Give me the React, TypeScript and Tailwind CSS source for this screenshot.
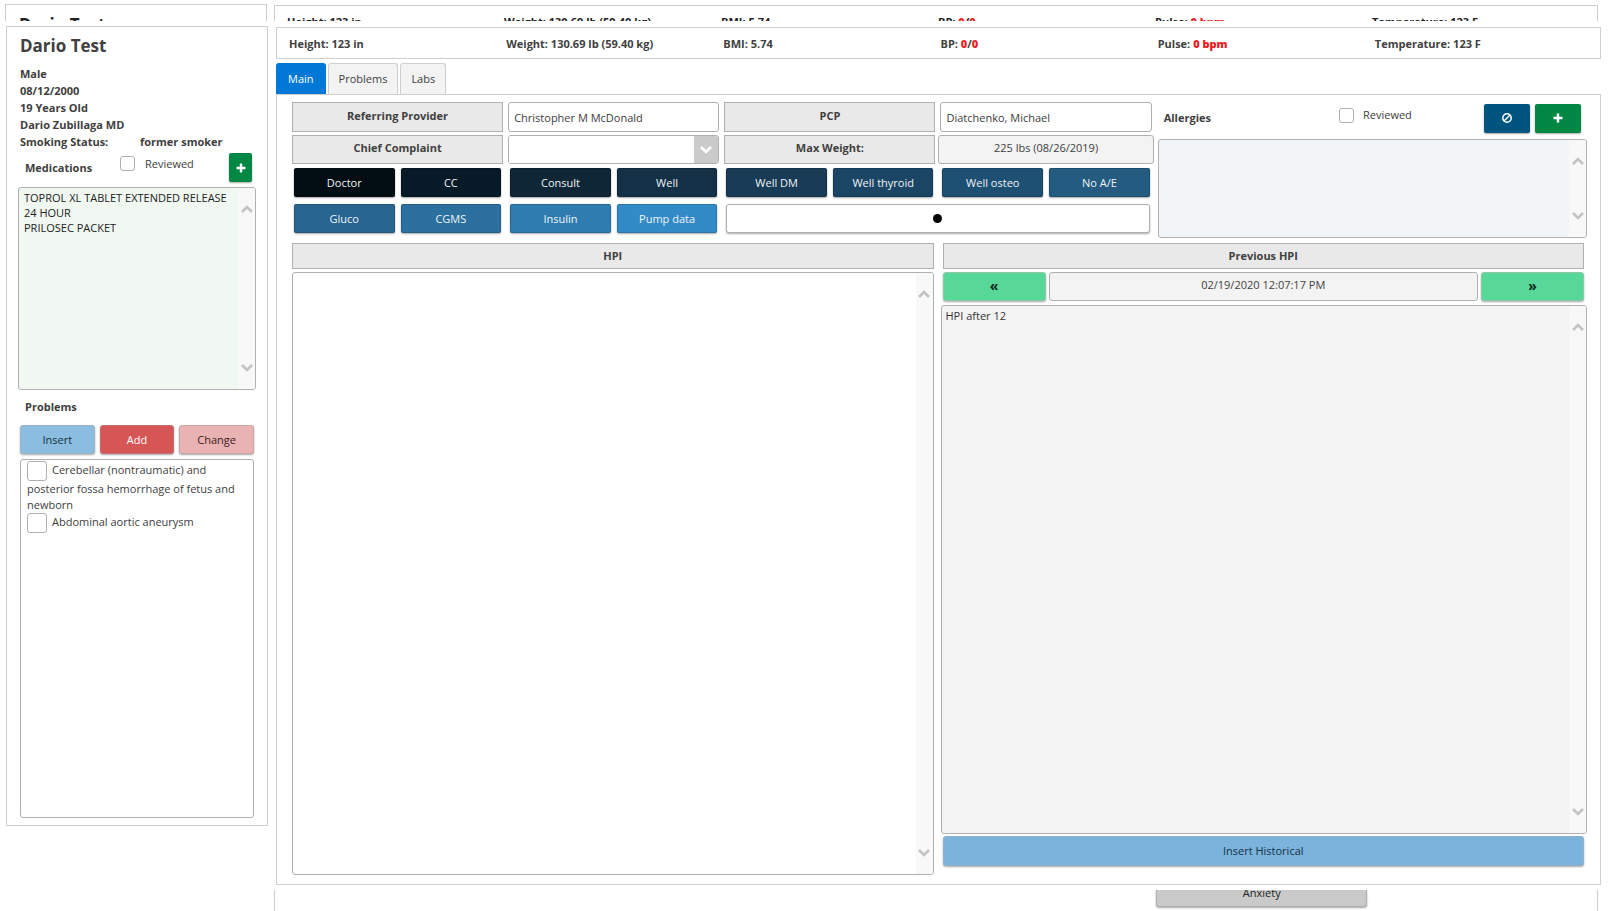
import type { ReactNode } from "react";

const shadow = "shadow-[0_1px_2px_rgba(0,0,0,0.35)]";

function Chevron({ up = false, className = "text-[#c3c3c3]" }: { up?: boolean; className?: string }) {
  return (
    <svg width="12" height="8" viewBox="0 0 12 8" fill="none" stroke="currentColor" strokeWidth="2.6" className={className} aria-hidden="true">
      <path d={up ? "M1 7 L6 2 L11 7" : "M1 1 L6 6 L11 1"} />
    </svg>
  );
}

function PlusIcon() {
  return (
    <svg width="10" height="10" viewBox="0 0 10 10" fill="currentColor" aria-hidden="true">
      <path d="M3.8 0.5h2.4v3.3h3.3v2.4h-3.3v3.3h-2.4v-3.3h-3.3v-2.4h3.3z" />
    </svg>
  );
}

function BanIcon() {
  return (
    <svg width="10" height="10" viewBox="0 0 10 10" fill="none" stroke="currentColor" strokeWidth="1.5" aria-hidden="true">
      <circle cx="5" cy="5" r="4.2" />
      <path d="M8 2 L2 8" />
    </svg>
  );
}

function ScrollPane({ children, className }: { children: ReactNode; className: string }) {
  return (
    <div className={`flex overflow-hidden rounded-[3px] border border-[#b0b0b0] ${className}`}>
      <div className="flex min-w-0 flex-1">{children}</div>
      <div className="flex w-[17px] flex-col items-center justify-between bg-[#f8f8f8] py-[17px]">
        <Chevron up />
        <Chevron />
      </div>
    </div>
  );
}

const area = "block w-full resize-none overflow-hidden bg-transparent px-1 py-0.5 text-[11px] leading-[15px] text-[#333] outline-none";

function FieldLabel({ htmlFor, children }: { htmlFor: string; children: ReactNode }) {
  return (
    <label htmlFor={htmlFor} className="flex items-center justify-center border border-[#b0b0b0] bg-[#e9e9e9] pb-[3px] font-bold">
      {children}
    </label>
  );
}

function Vitals() {
  return (
    <>
      <span>Height: 123 in</span>
      <span>Weight: 130.69 lb (59.40 kg)</span>
      <span>BMI: 5.74</span>
      <span>BP: <b className="text-[#ed1c24]">0</b>/<b className="text-[#ed1c24]">0</b></span>
      <span>Pulse: <b className="text-[#ed1c24]">0 bpm</b></span>
      <span>Temperature: 123 F</span>
    </>
  );
}

const templates = [
  [
    { label: "Doctor", color: "bg-[#020e14]" },
    { label: "CC", color: "bg-[#071a27]" },
  ],
  [
    { label: "Consult", color: "bg-[#0e2636]" },
    { label: "Well", color: "bg-[#133047]" },
  ],
  [
    { label: "Well DM", color: "bg-[#183b56]" },
    { label: "Well thyroid", color: "bg-[#1a4564]" },
  ],
  [
    { label: "Well osteo", color: "bg-[#1d5073]" },
    { label: "No A/E", color: "bg-[#235b81]" },
  ],
];

const dataTemplates = [
  [
    { label: "Gluco", color: "bg-[#286591]" },
    { label: "CGMS", color: "bg-[#2b709f]" },
  ],
  [
    { label: "Insulin", color: "bg-[#2f7cb1]" },
    { label: "Pump data", color: "bg-[#328bc6]" },
  ],
];

function TemplatePair({ items }: { items: { label: string; color: string }[] }) {
  return (
    <div className="grid grid-cols-2 gap-1.5 px-0.5">
      {items.map((item) => (
        <button key={item.label} className={`h-[29px] rounded-[2px] border border-black/15 text-[#f0f4f7] ${shadow} ${item.color}`}>
          {item.label}
        </button>
      ))}
    </div>
  );
}

function Sidebar() {
  return (
    <aside className="w-[262px] shrink-0 self-start border border-[#cfcfcf] px-[13px] pb-[7px]">
      <h1 className="mt-[7px] text-[17px] leading-6 font-bold">Dario Test</h1>
      <div className="mt-[7px] leading-[17px] font-bold">
        <p>Male</p>
        <p>08/12/2000</p>
        <p>19 Years Old</p>
        <p>Dario Zubillaga MD</p>
        <p className="flex"><span className="w-[120px]">Smoking Status:</span><span>former smoker</span></p>
      </div>
      <div className="mt-[3px] flex h-[29px] items-center pr-0.5 pl-[5px]">
        <h2 className="w-[95px] font-bold">Medications</h2>
        <input id="med-reviewed" type="checkbox" className="mb-2 size-[15px] appearance-none rounded-[3px] border border-[#b0b0b0]" />
        <label htmlFor="med-reviewed" className="mb-2 ml-2.5">Reviewed</label>
        <button aria-label="Add medication" className={`ml-auto flex h-[29px] w-[23px] items-center justify-center rounded-[2px] bg-[#008744] text-white ${shadow}`}>
          <PlusIcon />
        </button>
      </div>
      <ScrollPane className="-mx-0.5 mt-[5px] h-[203px] bg-[#f1f8f2]">
        <ul className="px-[5px] py-0.5 leading-[15px] text-[#222]">
          <li>TOPROL XL TABLET EXTENDED RELEASE 24 HOUR</li>
          <li>PRILOSEC PACKET</li>
        </ul>
      </ScrollPane>
      <h2 className="mt-2 pl-[5px] leading-[17px] font-bold">Problems</h2>
      <div className="mt-2.5 grid grid-cols-3 gap-[5px]">
        <button className={`h-[29px] rounded-[3px] border border-[#9fb4c4] bg-[#8abde0] text-[#17313f] ${shadow}`}>Insert</button>
        <button className={`h-[29px] rounded-[3px] border border-[#c07070] bg-[#d65656] text-white ${shadow}`}>Add</button>
        <button className={`h-[29px] rounded-[3px] border border-[#c9a5a5] bg-[#eab3b3] text-[#3b1a1a] ${shadow}`}>Change</button>
      </div>
      <ul className="mt-[5px] h-[359px] rounded-[3px] border border-[#b0b0b0] px-1.5 pt-px leading-4">
        <li>
          <input id="problem-1" type="checkbox" className="mr-[5px] size-5 appearance-none rounded-[3px] border border-[#b0b0b0] align-middle" />
          <label htmlFor="problem-1">Cerebellar (nontraumatic) and posterior fossa hemorrhage of fetus and newborn</label>
        </li>
        <li>
          <input id="problem-2" type="checkbox" className="mr-[5px] size-5 appearance-none rounded-[3px] border border-[#b0b0b0] align-middle" />
          <label htmlFor="problem-2">Abdominal aortic aneurysm</label>
        </li>
      </ul>
    </aside>
  );
}

function Intake() {
  const field = "min-w-0 rounded-[3px] border border-[#b0b0b0]";
  return (
    <section className="grid grid-cols-3 gap-x-[5px]">
      <div className="col-span-2">
        <div className="grid grid-cols-4 grid-rows-[30px_29px] gap-x-[5px] gap-y-[3px]">
          <FieldLabel htmlFor="referring">Referring Provider</FieldLabel>
          <input id="referring" defaultValue="Christopher M McDonald" className={`${field} px-[5px] pt-0.5`} />
          <FieldLabel htmlFor="pcp">PCP</FieldLabel>
          <input id="pcp" defaultValue="Diatchenko, Michael" className={`${field} px-[5px] pt-0.5`} />
          <FieldLabel htmlFor="complaint">Chief Complaint</FieldLabel>
          <div className={`${field} flex overflow-hidden`}>
            <select id="complaint" className="min-w-0 flex-1 appearance-none bg-white px-1">
              <option></option>
            </select>
            <span className="flex w-6 items-center justify-center bg-[#cacaca]"><Chevron className="text-white" /></span>
          </div>
          <FieldLabel htmlFor="max-weight">Max Weight:</FieldLabel>
          <output id="max-weight" className={`${field} -mx-0.5 flex items-center justify-center bg-[#f3f3f3] pb-[3px]`}>225 lbs (08/26/2019)</output>
        </div>
        <div className="mt-1 grid grid-cols-4 gap-x-[5px] gap-y-[7px]">
          {templates.map((pair) => <TemplatePair key={pair[0].label} items={pair} />)}
          {dataTemplates.map((pair) => <TemplatePair key={pair[0].label} items={pair} />)}
          <div className="col-span-2 px-0.5">
            <button className={`flex h-[29px] w-full items-center justify-center rounded-[3px] border border-[#b0b0b0] bg-white ${shadow}`} aria-label="Record">
              <span className="size-[9px] rounded-full bg-black" />
            </button>
          </div>
        </div>
      </div>
      <div className="flex flex-col">
        <div className="flex h-[32px] items-center gap-[5px] pr-[3px]">
          <h2 className="flex-1 pl-[7px] font-bold">Allergies</h2>
          <input id="allergy-reviewed" type="checkbox" className="mb-1.5 size-[15px] appearance-none rounded-[3px] border border-[#b0b0b0]" />
          <label htmlFor="allergy-reviewed" className="mb-1.5 w-[120px] pl-1">Reviewed</label>
          <button aria-label="No allergies" className={`flex h-[29px] w-[46px] items-center justify-center rounded-[2px] bg-[#005580] text-white ${shadow}`}><BanIcon /></button>
          <button aria-label="Add allergy" className={`flex h-[29px] w-[46px] items-center justify-center rounded-[2px] bg-[#008744] text-white ${shadow}`}><PlusIcon /></button>
        </div>
        <ScrollPane className="-mr-[3px] ml-px mt-[5px] h-[99px] bg-[#f1f5f8]">
          <textarea aria-label="Allergies" className={area} />
        </ScrollPane>
      </div>
    </section>
  );
}

function History() {
  const step = `h-[29px] rounded-[3px] border border-[#8fc7a9] bg-[#57d798] pb-0.5 text-[14px] font-bold text-[#0c2a1a] ${shadow}`;
  const heading = "flex h-[26px] items-center justify-center border border-[#b0b0b0] bg-[#e9e9e9] font-bold";
  return (
    <section className="mt-[5px] grid flex-1 grid-cols-2 gap-[9px]">
      <div className="flex flex-col">
        <h2 className={heading}>HPI</h2>
        <ScrollPane className="mt-[3px] flex-1">
          <textarea aria-label="HPI" className={area} />
        </ScrollPane>
      </div>
      <div className="flex flex-col pb-[9px]">
        <h2 className={heading}>Previous HPI</h2>
        <div className="mt-[3px] grid grid-cols-[103px_1fr_103px] gap-[3px]">
          <button aria-label="Previous entry" className={step}>«</button>
          <div className="flex items-center justify-center rounded-[3px] border border-[#b0b0b0] bg-[#f3f3f3] pb-[3px]">02/19/2020 12:07:17 PM</div>
          <button aria-label="Next entry" className={step}>»</button>
        </div>
        <ScrollPane className="-mr-[3px] -ml-0.5 mt-1 flex-1 bg-[#f3f3f3]">
          <textarea aria-label="Previous HPI" readOnly defaultValue="HPI after 12" className={area} />
        </ScrollPane>
        <button className={`mt-0.5 h-[30px] rounded-[3px] border border-[#95b0c4] bg-[#7ab3dc] text-[#17313f] ${shadow}`}>Insert Historical</button>
      </div>
    </section>
  );
}

export default function App() {
  return (
    <div className="flex min-h-screen flex-col overflow-hidden bg-white font-['Open_Sans','Noto_Sans',sans-serif] text-[11px] leading-4 text-[#404040]">
      <div className="flex h-[21px] items-start gap-[7px] overflow-hidden pt-1 pr-2.5 pl-[5px] font-bold text-[#222]">
        <div className="w-[262px] shrink-0 border border-[#cfcfcf] px-[13px] pt-2 pb-8 text-[17px] leading-6">Dario Test</div>
        <div className="mt-px grid flex-1 grid-cols-6 border border-[#cfcfcf] pt-2 pr-2 pb-8 pl-3"><Vitals /></div>
      </div>
      <div className="mt-[5px] flex flex-1 gap-2 pr-[7px] pl-1.5">
        <Sidebar />
        <main className="flex min-w-0 flex-1 flex-col pt-px">
          <div className="grid h-8 grid-cols-6 items-center border border-[#cfcfcf] pt-0.5 pr-2 pl-3 font-bold"><Vitals /></div>
          <nav className="mt-1 flex gap-0.5">
            <button className="h-[31px] rounded-t-[3px] bg-[#0078d7] px-3 text-white">Main</button>
            <button className="h-[31px] rounded-t-[3px] border border-b-0 border-[#cfcfcf] bg-[#f3f3f3] px-2.5">Problems</button>
            <button className="h-[31px] rounded-t-[3px] border border-b-0 border-[#cfcfcf] bg-[#f3f3f3] px-2.5">Labs</button>
          </nav>
          <div className="flex flex-1 flex-col border border-[#cfcfcf] pt-[7px] pr-4 pb-[9px] pl-[15px]">
            <Intake />
            <History />
          </div>
        </main>
      </div>
      <div className="mt-[5px] flex h-[21px] items-start overflow-hidden pr-2.5 pl-[274px]">
        <div className="grid flex-1 grid-cols-6 gap-[5px] border-x border-[#cfcfcf] pr-[14px] pb-8 pl-[18px]">
          <button className={`col-start-5 flex h-[17px] items-end justify-center rounded-b-[3px] border border-t-0 border-[#b0b0b0] bg-[#cacaca] pb-[5px] text-[#222] ${shadow}`}>Anxiety</button>
        </div>
      </div>
    </div>
  );
}
